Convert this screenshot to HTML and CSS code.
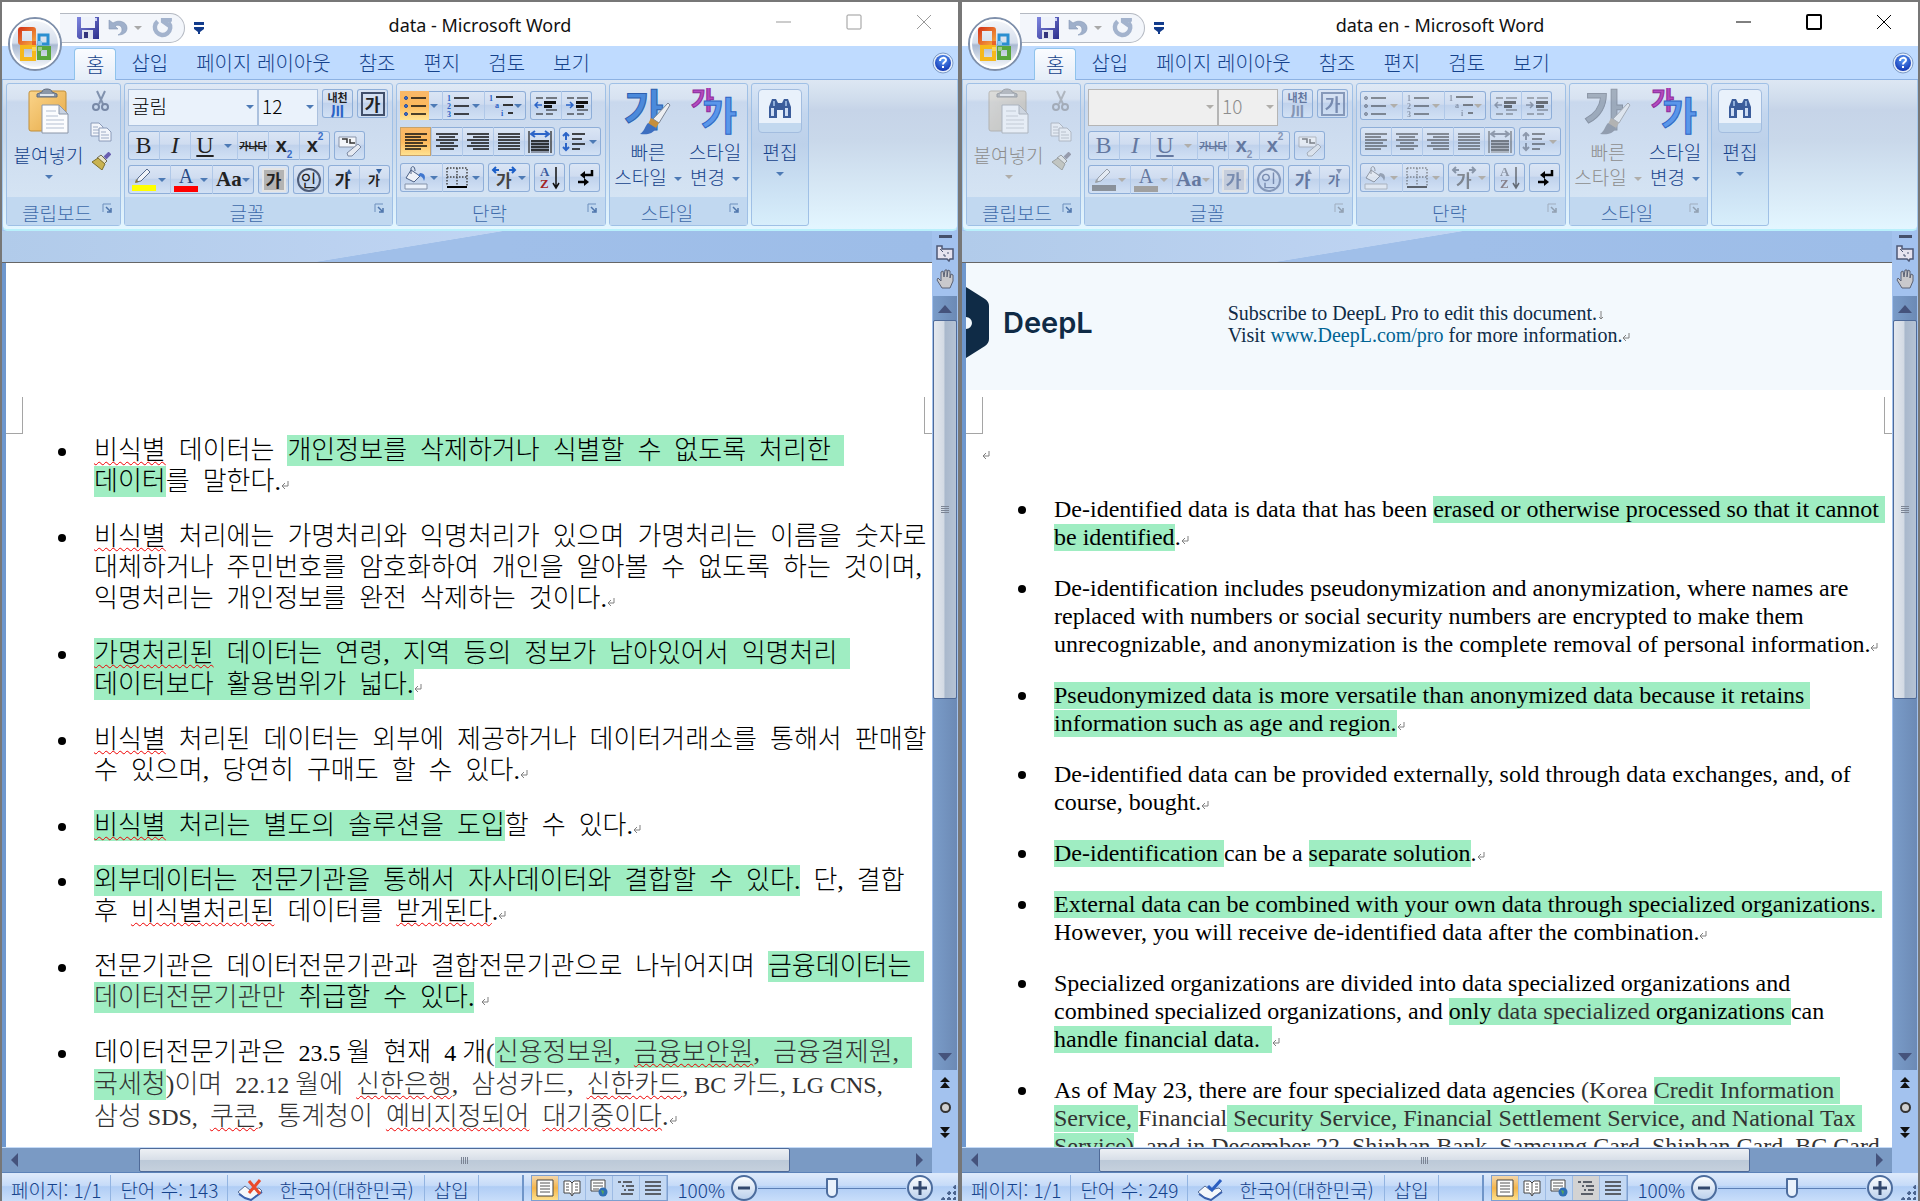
FILE: index.html
```html
<!DOCTYPE html>
<html lang="ko">
<head>
<meta charset="UTF-8">
<meta name="viewport" content="width=device-width, initial-scale=1">
<title>Microsoft Word</title>
<link rel="stylesheet" href="styles.css">
</head>
<body>

<!-- Icons shared by both windows -->
<svg class="sprite" aria-hidden="true">
  <defs>
    <linearGradient id="gOrb" x1="0" y1="0" x2="0" y2="1">
      <stop offset="0" stop-color="#f7f9fc"/><stop offset=".48" stop-color="#d5deec"/>
      <stop offset=".52" stop-color="#a9b9d2"/><stop offset="1" stop-color="#ffffff"/>
    </linearGradient>
    <linearGradient id="gDisk" x1="0" y1="0" x2="1" y2="1">
      <stop offset="0" stop-color="#7f86e0"/><stop offset="1" stop-color="#2c2f8c"/>
    </linearGradient>
    <linearGradient id="gRed" x1="0" y1="0" x2="1" y2="1">
      <stop offset="0" stop-color="#d63c1c"/><stop offset="1" stop-color="#f7a13c"/>
    </linearGradient>
    <linearGradient id="gBoard" x1="0" y1="0" x2="1" y2="1">
      <stop offset="0" stop-color="#fbd48a"/><stop offset="1" stop-color="#e5a945"/>
    </linearGradient>
    <radialGradient id="gHelp" cx=".5" cy=".3" r=".7">
      <stop offset="0" stop-color="#5b9bf5"/><stop offset="1" stop-color="#1236b4"/>
    </radialGradient>
    <linearGradient id="gZoom" x1="0" y1="0" x2="0" y2="1">
      <stop offset="0" stop-color="#ffffff"/><stop offset="1" stop-color="#b9cfec"/>
    </linearGradient>
  </defs>
  <symbol id="orb" viewBox="0 0 56 56">
    <circle cx="28" cy="28" r="26" fill="url(#gOrb)" stroke="#7f90ab" stroke-width="2"/>
    <circle cx="28" cy="28" r="24" fill="none" stroke="#fff" stroke-width="2"/>
    <rect x="13" y="13" width="14" height="14" rx="1" fill="none" stroke="url(#gRed)" stroke-width="4"/>
    <rect x="32" y="19" width="9" height="9" fill="none" stroke="#2b8fd0" stroke-width="3"/>
    <rect x="15" y="31" width="12" height="12" fill="none" stroke="#f5b81c" stroke-width="4"/>
    <rect x="32" y="32" width="10" height="10" fill="none" stroke="#58a63c" stroke-width="4"/>
    <path d="M25 25h4v4h-4z" fill="#e8632a"/><path d="M31 25h4v4h-4z" fill="#8ec9ee"/>
    <path d="M25 31h4v4h-4z" fill="#fbd655"/><path d="M31 31h4v4h-4z" fill="#9ccb86"/>
  </symbol>
  <symbol id="save" viewBox="0 0 22 22">
    <path d="M0 0h22v22H2L0 20z" fill="url(#gDisk)"/>
    <path d="M4 0h14v11H4z" fill="#eef2fb"/><path d="M18 1h2v3h-2z" fill="#cfd4f5"/>
    <path d="M5 13h11v9H5z" fill="#dfe4f0"/><path d="M7 15h4v6H7z" fill="#33347c"/>
  </symbol>
  <symbol id="undo" viewBox="0 0 20 20">
    <path d="M1 2v9h9l-3-3c4-2 7 0 7 4 0 2-2 4-4 5 6 0 9-3 9-7 0-6-8-9-14-5z" fill="#9fb0cb" stroke="#8798b6" stroke-width=".6"/>
  </symbol>
  <symbol id="redo" viewBox="0 0 20 20">
    <path d="M6 4a7 7 0 1 0 10 1" fill="none" stroke="#a3b3cd" stroke-width="4"/>
    <path d="M9 1h10v3l-3 1v5l-7-5z" fill="#a3b3cd"/>
  </symbol>
  <symbol id="customize" viewBox="0 0 10 12">
    <path d="M0 0h10v3H0zM0 5h10v2L6 10v2H4v-2L0 7z" fill="#123b8c"/>
  </symbol>
  <symbol id="help" viewBox="0 0 22 22">
    <circle cx="11" cy="11" r="10" fill="#e6effb" stroke="#7d9bc6"/>
    <circle cx="11" cy="11" r="8" fill="url(#gHelp)"/>
    <path d="M8 9c0-4 6-4 6-1 0 2-3 2-3 4.500" fill="none" stroke="#fff" stroke-width="2"/><path d="M10 14h2v2h-2z" fill="#fff"/>
  </symbol>
  <symbol id="paste" viewBox="0 0 42 46">
    <rect x="1" y="3" width="37" height="40" rx="2" fill="url(#gBoard)" stroke="#c18f3a"/>
    <path d="M9 9V6l5-2c0-4 10-4 10 0l5 2v3z" fill="#8b97a8" stroke="#5f6b7d"/><path d="M12 6h14v2H12z" fill="#dfe5ec"/>
    <path d="M14 17h17l9 9v19H14z" fill="#fbfcfe" stroke="#8b96a8"/><path d="M31 17v9h9z" fill="#c9d3e2" stroke="#8b96a8"/>
    <path d="M18 23h10M18 28h12M18 32h18M18 36h18M18 40h18" stroke="#b4bfd1"/>
  </symbol>
  <symbol id="cut" viewBox="0 0 20 22">
    <path d="M6 1l6 13M14 1L8 14" stroke="#8192ae" stroke-width="2"/>
    <circle cx="5" cy="17" r="3" fill="none" stroke="#7788a6" stroke-width="2"/><circle cx="14" cy="17" r="3" fill="none" stroke="#7788a6" stroke-width="2"/>
  </symbol>
  <symbol id="copy" viewBox="0 0 22 20">
    <path d="M1 1h8l4 4v9H1z" fill="#f3f6fb" stroke="#8a9ab8"/><path d="M3 5h5M3 8h8M3 11h8" stroke="#9dabc4"/>
    <path d="M9 6h8l4 4v9H9z" fill="#f3f6fb" stroke="#8a9ab8"/><path d="M11 10h5M11 13h8M11 16h8" stroke="#9dabc4"/>
  </symbol>
  <symbol id="brush" viewBox="0 0 20 18">
    <path d="M19 1l-5 5" stroke="#6a5fb0" stroke-width="4"/>
    <path d="M10 3l6 6-3 3-7-6z" fill="#e8e4c8" stroke="#6d6a55"/><path d="M7 6l7 6-3 6L1 10z" fill="#c9b350" stroke="#7d6e2c"/>
  </symbol>
  <symbol id="launch" viewBox="0 0 11 11">
    <path d="M1 9V1h8" fill="none" stroke="#6c8fbd"/><path d="M4 4l4 4M9 5v4H5" fill="none" stroke="#4d74ab" stroke-width="1.500"/>
  </symbol>
  <symbol id="eraser" viewBox="0 0 24 24">
    <path d="M1 3h17v10H1z" fill="#f4f6fa" stroke="#8893a8"/><path d="M4 5h5v4M12 5v4h5" fill="none" stroke="#333" stroke-width="1.500"/>
    <path d="M20 10l3 3-9 9h-4l-1-3z" fill="#e6eaf2" stroke="#7e8aa3"/>
  </symbol>
  <symbol id="bullets" viewBox="0 0 24 22">
    <path d="M8 3h15M8 11h15M8 19h15" stroke="#111" stroke-width="1.500"/>
    <g fill="#4676d2" stroke="#234a9c"><circle cx="3" cy="3" r="1.500"/><circle cx="3" cy="11" r="1.500"/><circle cx="3" cy="19" r="1.500"/></g>
  </symbol>
  <symbol id="outdent" viewBox="0 0 24 20">
    <path d="M2 2h7M12 2h11M12 14h11M2 18h7M12 18h7" stroke="#111" stroke-width="1.200"/><path d="M10 5h12v3H10zM10 9h8v3h-8z" fill="#111"/>
    <path d="M1 9h7M4 6L1 9l3 3" fill="none" stroke="#2b64c8" stroke-width="1.500"/>
  </symbol>
  <symbol id="indent" viewBox="0 0 24 20">
    <path d="M2 2h7M12 2h11M12 14h11M2 18h7M12 18h7" stroke="#111" stroke-width="1.200"/><path d="M11 5h12v3H11zM11 9h8v3h-8z" fill="#111"/>
    <path d="M1 9h7M5 6l3 3-3 3" fill="none" stroke="#2b64c8" stroke-width="1.500"/>
  </symbol>
  <symbol id="left" viewBox="0 0 22 18"><path d="M0 1h22M0 4h16M0 7h22M0 10h18M0 13h22M0 16h16" stroke="#111" stroke-width="1.300"/></symbol>
  <symbol id="center" viewBox="0 0 22 18"><path d="M0 1h22M3 4h16M0 7h22M4 10h14M0 13h22M4 16h14" stroke="#111" stroke-width="1.300"/></symbol>
  <symbol id="right" viewBox="0 0 22 18"><path d="M0 1h22M6 4h16M0 7h22M4 10h18M0 13h22M6 16h16" stroke="#111" stroke-width="1.300"/></symbol>
  <symbol id="justify" viewBox="0 0 22 18"><path d="M0 1h22M0 4h22M0 7h22M0 10h22M0 13h22M0 16h22" stroke="#111" stroke-width="1.300"/></symbol>
  <symbol id="spread" viewBox="0 0 24 24">
    <path d="M1 1v22M23 1v22" stroke="#444" stroke-width="1.500"/><path d="M3 10h18v13H3z" fill="#8b95a6"/><path d="M3 11h18M3 14h18M3 17h18M3 20h18" stroke="#111" stroke-width="1.300"/>
    <path d="M3 4h18M7 1L3 4l4 3M17 1l4 3-4 3" fill="none" stroke="#2b64c8" stroke-width="2"/>
  </symbol>
  <symbol id="spacing" viewBox="0 0 24 20">
    <path d="M10 2h13M10 7h10M10 12h13M10 17h8" stroke="#111" stroke-width="1.300"/>
    <path d="M4 1v7M1 4l3-3 3 3M4 11v7M1 15l3 3 3-3" fill="none" stroke="#2b64c8" stroke-width="2"/>
  </symbol>
  <symbol id="bucket" viewBox="0 0 26 24">
    <path d="M8 4l9 6-6 6-8-4z" fill="#eef2f8" stroke="#4c6084"/><path d="M8 8V2c2-3 4-1 4 3" fill="none" stroke="#4c6084"/><path d="M17 7c5 0 6 4 4 8-1-4-3-5-6-5z" fill="#3f76cf"/>
    <path d="M2 18h22v5H2z" fill="#e9f1fb" stroke="#8593aa"/>
  </symbol>
  <symbol id="borders" viewBox="0 0 22 22">
    <path d="M1 1h20v18M1 1v18M11 1v18M1 10h20" fill="none" stroke="#444" stroke-width="1.500" stroke-dasharray="1.500 1.500"/><path d="M1 20h20" stroke="#000" stroke-width="2"/>
  </symbol>
  <symbol id="marks" viewBox="0 0 20 22">
    <path d="M17 3v5H9M3 15h7" fill="none" stroke="#000" stroke-width="2.500"/><path d="M10 4v8L5 8zM9 11v8l5-4z"/>
  </symbol>
  <symbol id="find" viewBox="0 0 24 20">
    <path d="M4 1h4l2 4h4l2-4h4l3 8v11h-8v-8h-6v8H1V9z" fill="#3b5c9b"/>
    <path d="M3 10h3v8H3zM17 10h3v8h-3z" fill="#cddcf3"/><path d="M5 3h2v5H5zM17 3h2v5h-2z" fill="#8fadd9"/>
  </symbol>
  <symbol id="ruler" viewBox="0 0 18 18">
    <path d="M1 2h5v3h11v10h-3l-1 2-2-2H1z" fill="#e6e3ef" stroke="#4d5875" stroke-width="1.500"/><path d="M4 5l3 3M7 11h2v2M12 8v2" stroke="#4d5875" fill="none"/>
  </symbol>
  <symbol id="hand" viewBox="0 0 18 20">
    <path d="M5 12L2 9 1 11l5 8h8l3-7V6l-2-1-1 4V2l-2-1-1 7V1H9L8 8 7 2 5 3z" fill="#c9c9cc" stroke="#5b6172"/>
  </symbol>
  <symbol id="dblUp" viewBox="0 0 10 12"><path d="M5 0l5 5H0zM5 5l5 6H0z" fill="#111"/></symbol>
  <symbol id="dblDown" viewBox="0 0 10 12"><path d="M0 1h10L5 7zM0 7h10l-5 5z" fill="#111"/></symbol>
  <symbol id="vPrint" viewBox="0 0 18 18"><path d="M1 1h16v16H1z" fill="#fff" stroke="#444"/><path d="M4 4h10M4 7h10M4 10h10M4 13h10" stroke="#555"/></symbol>
  <symbol id="vRead" viewBox="0 0 18 18"><path d="M1 2h6l2 2 2-2h6v12h-6l-2 3-2-3H1z" fill="#fff" stroke="#444"/><path d="M9 4v12M3 5h3M3 8h3M3 11h3M12 5h3M12 8h3M12 11h3" stroke="#555"/></symbol>
  <symbol id="vWeb" viewBox="0 0 18 18"><path d="M1 1h14v11H1z" fill="#fff" stroke="#444"/><path d="M3 4h10M3 7h10M3 10h6" stroke="#555"/><circle cx="13" cy="13" r="4.500" fill="#2f6fb5"/><path d="M11 11l3 1-1 4z" fill="#59a85a"/></symbol>
  <symbol id="vOutline" viewBox="0 0 18 18"><path d="M1 3h3M6 3h9M5 7h2M9 7h8M7 11h2M11 11h6M4 15h12" stroke="#5a5f68" stroke-width="2"/></symbol>
  <symbol id="vDraft" viewBox="0 0 18 18"><path d="M1 3h16M1 7h16M1 11h16M1 15h16" stroke="#5a5f68" stroke-width="2"/></symbol>
  <symbol id="minus" viewBox="0 0 26 26"><circle cx="13" cy="13" r="12" fill="url(#gZoom)" stroke="#4c6c9d" stroke-width="2"/><path d="M7 13h12" stroke="#33486d" stroke-width="3"/></symbol>
  <symbol id="plus" viewBox="0 0 26 26"><circle cx="13" cy="13" r="12" fill="url(#gZoom)" stroke="#4c6c9d" stroke-width="2"/><path d="M6 13h14M13 6v14" stroke="#33486d" stroke-width="3"/></symbol>
  <symbol id="ret" viewBox="0 0 8 9"><path d="M7 0v5H1M4 2L1 5l3 3" fill="none" stroke="#808080"/></symbol>
  <symbol id="brk" viewBox="0 0 8 9"><path d="M4 0v8M2 6l2 2 2-2" fill="none" stroke="#808080"/></symbol>
</svg>

<!-- Title bar, tabs and ribbon -->
<template id="topTemplate">
  <header class="titlebar">
    <div class="quick-access">
      <div class="qa-box">
        <button aria-label="저장"><svg width="22" height="22"><use href="#save"/></svg></button>
        <button aria-label="실행 취소"><svg width="20" height="20"><use href="#undo"/></svg><i class="arrow dim"></i></button>
        <button aria-label="다시 실행"><svg width="22" height="22"><use href="#redo"/></svg></button>
      </div>
      <button aria-label="빠른 실행 도구 모음 사용자 지정"><svg width="10" height="12"><use href="#customize"/></svg></button>
    </div>
    <h1 class="title"></h1>
    <div class="win-buttons">
      <button aria-label="최소화"><svg width="16" height="16"><path d="M0 8h15"/></svg></button>
      <button aria-label="최대화"><svg width="16" height="16"><rect x="1" y="1" width="14" height="14" rx="1"/></svg></button>
      <button aria-label="닫기"><svg width="16" height="16"><path d="M1 1l14 14M15 1L1 15"/></svg></button>
    </div>
    <button class="orb" aria-label="Office 단추"><svg width="56" height="56"><use href="#orb"/></svg></button>
  </header>
  <nav class="tabs">
    <button class="active">홈</button><button>삽입</button><button>페이지 레이아웃</button><button>참조</button><button>편지</button><button>검토</button><button>보기</button>
    <button class="help" aria-label="도움말"><svg width="22" height="22"><use href="#help"/></svg></button>
  </nav>
  <div class="ribbon">
    <section class="group clipboard">
      <div class="group-body">
        <button class="big edit"><svg width="42" height="46"><use href="#paste"/></svg><span>붙여넣기</span><i class="arrow"></i></button>
        <div class="small-icons">
          <button class="edit" aria-label="잘라내기"><svg width="20" height="22"><use href="#cut"/></svg></button>
          <button class="edit" aria-label="복사"><svg width="22" height="20"><use href="#copy"/></svg></button>
          <button class="edit" aria-label="서식 복사"><svg width="20" height="18"><use href="#brush"/></svg></button>
        </div>
      </div>
      <h2>클립보드<button class="launcher" aria-label="클립보드 열기"><svg width="11" height="11"><use href="#launch"/></svg></button></h2>
    </section>
    <section class="group font">
      <div class="group-body">
        <div class="row">
          <div class="combos">
            <label class="combo name"><select class="edit" aria-label="글꼴"><option>굴림</option></select><i class="arrow"></i></label>
            <label class="combo size"><select class="edit" aria-label="글꼴 크기"><option>12</option></select><i class="arrow"></i></label>
          </div>
          <div class="seg"><button class="edit ruby" aria-label="윗주 달기">내천<b>川</b></button></div>
          <div class="seg"><button class="edit" aria-label="문자 테두리"><span class="boxed">가</span></button></div>
        </div>
        <div class="row">
          <div class="seg">
            <button class="edit serif"><b>B</b></button><button class="edit serif"><em>I</em></button>
            <button class="edit serif wide"><u>U</u><i class="arrow"></i></button>
            <button class="edit strike"><s>가나다</s></button>
            <button class="edit script">x<sub>2</sub></button><button class="edit script">x<sup>2</sup></button>
          </div>
          <div class="seg"><button class="edit" aria-label="서식 지우기"><svg width="24" height="24"><use href="#eraser"/></svg></button></div>
        </div>
        <div class="row">
          <div class="seg">
            <button class="edit drop" aria-label="강조 색">
              <svg width="26" height="24">
                <path d="M16 1l3 3-9 9-5 1 2-4z" fill="#f1f4f9" stroke="#56698c"/><path d="M5 11l-1 4 4-1z" fill="#8b7a3a"/>
                <path class="ink" d="M1 17h24v6H1z"/>
              </svg><i class="arrow"></i>
            </button>
            <button class="edit drop"><span class="color-a">A</span><i class="arrow"></i></button>
            <button class="edit drop"><span class="case">Aa</span><i class="arrow"></i></button>
          </div>
          <div class="seg"><button class="edit"><span class="shaded">가</span></button></div>
          <div class="seg"><button class="edit"><span class="circled">인</span></button></div>
          <div class="seg"><button class="edit grow">가</button><button class="edit shrink">가</button></div>
        </div>
      </div>
      <h2>글꼴<button class="launcher edit" aria-label="글꼴 열기"><svg width="11" height="11"><use href="#launch"/></svg></button></h2>
    </section>
    <section class="group paragraph">
      <div class="group-body">
        <div class="row">
          <div class="seg">
            <button class="edit drop on" aria-label="글머리 기호"><svg width="24" height="22"><use href="#bullets"/></svg><i class="arrow"></i></button>
            <button class="edit drop" aria-label="번호 매기기">
              <svg class="num-icon" width="24" height="22">
                <path d="M8 3h15M8 11h15M8 19h15" stroke="#111" stroke-width="1.500"/>
                <text x="1" y="6">1</text><text x="1" y="14">2</text><text x="1" y="22">3</text>
              </svg><i class="arrow"></i>
            </button>
            <button class="edit drop" aria-label="다단계 목록">
              <svg class="num-icon" width="26" height="24">
                <path d="M8 3h17M15 11h10M20 19h5" stroke="#333" stroke-width="2"/>
                <text x="1" y="7">1</text><text x="7" y="14">a</text><text x="13" y="22">i</text>
              </svg><i class="arrow"></i>
            </button>
          </div>
          <div class="seg">
            <button class="edit" aria-label="내어쓰기"><svg width="24" height="20"><use href="#outdent"/></svg></button>
            <button class="edit" aria-label="들여쓰기"><svg width="24" height="20"><use href="#indent"/></svg></button>
          </div>
        </div>
        <div class="row">
          <div class="seg">
            <button class="edit on" aria-label="왼쪽 맞춤"><svg width="22" height="18"><use href="#left"/></svg></button>
            <button class="edit" aria-label="가운데 맞춤"><svg width="22" height="18"><use href="#center"/></svg></button>
            <button class="edit" aria-label="오른쪽 맞춤"><svg width="22" height="18"><use href="#right"/></svg></button>
            <button class="edit" aria-label="양쪽 맞춤"><svg width="22" height="18"><use href="#justify"/></svg></button>
            <button class="edit" aria-label="균등 분할"><svg width="24" height="24"><use href="#spread"/></svg></button>
          </div>
          <div class="seg"><button class="edit drop" aria-label="줄 간격"><svg width="24" height="20"><use href="#spacing"/></svg><i class="arrow"></i></button></div>
        </div>
        <div class="row">
          <div class="seg">
            <button class="edit drop" aria-label="음영"><svg width="26" height="24"><use href="#bucket"/></svg><i class="arrow"></i></button>
            <button class="edit drop" aria-label="테두리"><svg width="22" height="22"><use href="#borders"/></svg><i class="arrow"></i></button>
          </div>
          <div class="seg">
            <button class="edit drop" aria-label="한글 레이아웃">
              <svg class="hangul-icon" width="26" height="24">
                <text x="5" y="21" font-size="17" fill="#444">가</text>
                <path d="M8 4H2M5 1L2 4l3 3M18 4h6M21 1l3 3-3 3" fill="none" stroke="#1c5fc8" stroke-width="2"/>
              </svg><i class="arrow"></i>
            </button>
          </div>
          <div class="seg">
            <button class="edit" aria-label="정렬">
              <svg class="sort-icon" width="22" height="26">
                <text x="1" y="11" fill="#3a5b9e">A</text><text x="1" y="23" fill="#a32525">Z</text>
                <path d="M17 2v20M14 18l3 5 3-5" fill="none" stroke="#111" stroke-width="1.500"/>
              </svg>
            </button>
          </div>
          <div class="seg"><button aria-label="편집 기호"><svg width="20" height="22"><use href="#marks"/></svg></button></div>
        </div>
      </div>
      <h2>단락<button class="launcher edit" aria-label="단락 열기"><svg width="11" height="11"><use href="#launch"/></svg></button></h2>
    </section>
    <section class="group styles">
      <div class="group-body">
        <button class="big edit">
          <svg class="hangul-icon" width="48" height="48">
            <text x="0" y="38" font-size="43" fill="#4b8adb" stroke="#2d5fae">가</text>
            <path d="M44 15l2 2-11 18-6-4z" fill="#eceef2" stroke="#7b8493"/><path d="M27 30l8 5-3 5-8-4z" fill="#c68f3c"/><path d="M24 35l8 5c-3 6-9 7-16 6 4-2 5-8 8-11z" fill="#3d6fc0"/>
          </svg>
          <span>빠른<br>스타일<i class="arrow"></i></span>
        </button>
        <button class="big">
          <svg class="hangul-icon" width="48" height="48">
            <text x="0" y="21" font-size="25" fill="#b44abf" stroke="#8d2c9c">가</text>
            <text x="10" y="42" font-size="39" fill="#5a96ea" stroke="#2d65c4">가</text>
          </svg>
          <span>스타일<br>변경<i class="arrow"></i></span>
        </button>
      </div>
      <h2>스타일<button class="launcher edit" aria-label="스타일 열기"><svg width="11" height="11"><use href="#launch"/></svg></button></h2>
    </section>
    <section class="group editing">
      <button class="big"><span class="find-frame"><svg width="24" height="20"><use href="#find"/></svg></span><span>편집</span><i class="arrow"></i></button>
    </section>
  </div>
  <div class="strip"></div>
</template>

<!-- Scroll bars and status bar -->
<template id="bottomTemplate">
  <aside class="side">
    <i class="split"></i>
    <button aria-label="눈금자"><svg width="18" height="18"><use href="#ruler"/></svg></button>
    <button aria-label="이동"><svg width="18" height="20"><use href="#hand"/></svg></button>
    <div class="vscroll">
      <i class="tri up"></i>
      <div class="vthumb"><i class="grip"></i></div>
      <i class="tri down"></i>
    </div>
    <div class="browse">
      <button aria-label="이전 페이지"><svg width="10" height="12"><use href="#dblUp"/></svg></button>
      <button aria-label="찾아보기 개체 선택"><i class="ball"></i></button>
      <button aria-label="다음 페이지"><svg width="10" height="12"><use href="#dblDown"/></svg></button>
    </div>
  </aside>
  <div class="hscroll">
    <i class="tri prev"></i>
    <div class="hthumb"><i class="grip"></i></div>
    <i class="tri next"></i>
  </div>
  <footer class="status">
    <span>페이지: 1/1</span>
    <span>단어 수: <b class="words"></b></span>
    <span class="lang">
      <svg width="26" height="22">
        <path d="M1 13l7-6 5 4 9-2 3 3-11 9-6-2z" fill="#f4f7fb" stroke="#5a6f97"/><path d="M2 15l6 4 6 2 11-8" fill="none" stroke="#3c61ad" stroke-width="2"/>
        <path class="proof-bad" d="M12 2l11 13M23 1L12 14" stroke="#ea4a2c" stroke-width="3"/>
        <path class="proof-ok" d="M11 7l4 4 9-10" fill="none" stroke="#2c5fc0" stroke-width="3"/>
      </svg>한국어(대한민국)
    </span>
    <span>삽입</span>
    <span class="fill"></span>
    <div class="views">
      <button class="on" aria-label="인쇄 모양"><svg width="18" height="18"><use href="#vPrint"/></svg></button>
      <button aria-label="전체 화면 읽기"><svg width="18" height="18"><use href="#vRead"/></svg></button>
      <button aria-label="웹 모양"><svg width="18" height="18"><use href="#vWeb"/></svg></button>
      <button class="outline" aria-label="개요"><svg width="18" height="18"><use href="#vOutline"/></svg></button>
      <button aria-label="초안"><svg width="18" height="18"><use href="#vDraft"/></svg></button>
    </div>
    <span class="percent">100%</span>
    <button aria-label="축소"><svg width="26" height="26"><use href="#minus"/></svg></button>
    <input type="range" min="0" max="200" value="100" aria-label="확대/축소">
    <button aria-label="확대"><svg width="26" height="26"><use href="#plus"/></svg></button>
    <i class="resize"></i>
  </footer>
</template>

<main class="desktop">
  <article class="window inactive" data-title="data - Microsoft Word" data-words="143">
    <div class="page korean">
      <div class="page-head"></div>
      <div class="crop"></div>
      <ul>
        <li><u>비식별</u>&ensp;데이터는&ensp;<mark>개인정보를&ensp;삭제하거나&ensp;식별할&ensp;수&ensp;없도록&ensp;처리한&ensp;</mark><br><mark>데이터</mark>를&ensp;말한다.<svg class="ret"><use href="#ret"/></svg></li>
        <li><u>비식별</u>&ensp;처리에는&ensp;가명처리와&ensp;익명처리가&ensp;있으며&ensp;가명처리는&ensp;이름을&ensp;숫자로<br>대체하거나&ensp;주민번호를&ensp;암호화하여&ensp;개인을&ensp;알아볼&ensp;수&ensp;없도록&ensp;하는&ensp;것이며,<br>익명처리는&ensp;개인정보를&ensp;완전&ensp;삭제하는&ensp;것이다.<svg class="ret"><use href="#ret"/></svg></li>
        <li><mark><u>가명처리된</u>&ensp;데이터는&ensp;연령,&ensp;지역&ensp;등의&ensp;정보가&ensp;남아있어서&ensp;익명처리&ensp;</mark><br><mark>데이터보다&ensp;활용범위가&ensp;넓다.</mark><svg class="ret"><use href="#ret"/></svg></li>
        <li><u>비식별</u>&ensp;처리된&ensp;데이터는&ensp;외부에&ensp;제공하거나&ensp;데이터거래소를&ensp;통해서&ensp;판매할<br>수&ensp;있으며,&ensp;당연히&ensp;구매도&ensp;할&ensp;수&ensp;있다.<svg class="ret"><use href="#ret"/></svg></li>
        <li><mark><u>비식별</u>&ensp;처리는&ensp;별도의&ensp;솔루션을&ensp;도입</mark>할&ensp;수&ensp;있다.<svg class="ret"><use href="#ret"/></svg></li>
        <li><mark>외부데이터는&ensp;전문기관을&ensp;통해서&ensp;자사데이터와&ensp;결합할&ensp;수&ensp;있다.</mark>&ensp;단,&ensp;결합<br>후&ensp;<u>비식별처리된</u>&ensp;데이터를&ensp;<u>받게된다</u>.<svg class="ret"><use href="#ret"/></svg></li>
        <li>전문기관은&ensp;데이터전문기관과&ensp;결합전문기관으로&ensp;나뉘어지며&ensp;<mark>금융데이터는&ensp;</mark><br><mark><span class="soft">데이터전문기관만</span>&ensp;취급할&ensp;수&ensp;있다.</mark>&nbsp;<svg class="ret"><use href="#ret"/></svg></li>
        <li>데이터전문기관은&ensp;<span class="latin">23.5 </span>월&ensp;현재&ensp;<span class="latin">4 </span>개<span class="soft">(<mark>신용정보원,&ensp;<u>금융보안원</u>,&ensp;금융결제원,&ensp;</mark><br><mark>국세청</mark>)이며&ensp;<span class="latin">22.12 </span>월에&ensp;<u>신한은행</u>,&ensp;삼성카드,&ensp;<u>신한카드</u><span class="latin">, BC </span>카드<span class="latin">, LG CNS,</span><br>삼성<span class="latin"> SDS,&ensp;</span><u>쿠콘</u>,&ensp;통계청이&ensp;<u>예비지정되어</u>&ensp;<u>대기중이다</u>.</span><svg class="ret"><use href="#ret"/></svg></li>
      </ul>
    </div>
  </article>

  <article class="window locked" data-title="data en - Microsoft Word" data-words="249">
    <div class="page english" lang="en">
      <div class="page-head deepl">
        <svg class="deepl-logo" width="23" height="72"><path d="M0 0l19 12q4 3 4 7v33q0 4-4 7L0 71V42a6 6 0 0 0 0-12z" fill="#0f2b46"/></svg>
        <strong>DeepL</strong>
        <p>Subscribe to DeepL Pro to edit this document.<svg class="ret"><use href="#brk"/></svg><br>Visit <a href="https://www.DeepL.com/pro">www.DeepL.com/pro</a> for more information.<svg class="ret"><use href="#ret"/></svg></p>
      </div>
      <div class="crop"></div>
      <p class="blank"><svg class="ret"><use href="#ret"/></svg></p>
      <ul>
        <li>De-identified data is data that has been <mark>erased or otherwise processed so that it cannot </mark><br><mark>be identified</mark>.<svg class="ret"><use href="#ret"/></svg></li>
        <li>De-identification includes pseudonymization and anonymization, where names are<br>replaced with numbers or social security numbers are encrypted to make them<br>unrecognizable, and anonymization is the complete removal of personal information.<svg class="ret"><use href="#ret"/></svg></li>
        <li><mark>Pseudonymized data is more versatile than anonymized data because it retains </mark><br><mark>information such as age and region.</mark><svg class="ret"><use href="#ret"/></svg></li>
        <li>De-identified data can be provided externally, sold through data exchanges, and, of<br>course, bought.<svg class="ret"><use href="#ret"/></svg></li>
        <li><mark>De-identification </mark>can be a <mark>separate solution</mark>.<svg class="ret"><use href="#ret"/></svg></li>
        <li><mark>External data can be combined with your own data through specialized organizations. </mark><br>However, you will receive de-identified data after the combination.<svg class="ret"><use href="#ret"/></svg></li>
        <li>Specialized organizations are divided into data specialized organizations and<br>combined specialized organizations, and <mark>only <span class="soft">data specialized</span> organizations </mark>can<br><mark>handle financial data.&nbsp; </mark><svg class="ret"><use href="#ret"/></svg></li>
        <li>As of May 23, there are four specialized data agencies <span class="soft">(Korea <mark>Credit Information </mark><br><mark>Service, </mark>Financial<mark> Security Service, Financial Settlement Service, and National Tax </mark><br><mark>Service)</mark>, and in December 22, Shinhan Bank, Samsung Card, Shinhan Card, BC Card</span></li>
      </ul>
    </div>
  </article>
</main>

<script src="script.js"></script>
</body>
</html>
```
FILE: styles.css
```css
* {
  box-sizing: border-box;
}
body {
  margin: 0;
  font-family: "Noto Sans CJK KR", sans-serif;
  font-weight: 300;
  background: #777;
}
h1, h2, p, ul {
  margin: 0;
  padding: 0;
  font-weight: inherit;
}
button {
  display: inline-flex;
  align-items: center;
  justify-content: center;
  padding: 0;
  border: 0;
  background: none;
  font: inherit;
  color: inherit;
}
.sprite {
  position: absolute;
  width: 0;
  height: 0;
}
svg {
  flex: none;
}
.desktop {
  display: flex;
  height: 100vh;
}
.window {
  flex: 1;
  min-width: 0;
  display: grid;
  grid-template-columns: minmax(0, 1fr) 26px;
  grid-template-rows: 44px 34px 151px 32px minmax(0, 1fr) 26px 28px;
  border: 2px solid #777;
  border-bottom: 0;
  background: #a3c2ee;
}
.titlebar, .tabs, .ribbon, .status {
  grid-column: 1 / 3;
}
.arrow {
  flex: none;
  display: inline-block;
  border: 4px solid transparent;
  border-top-color: #4d7ab5;
  border-bottom: 0;
}
.arrow.dim {
  border-top-color: #a9a9a9;
}

/* Title bar */
.titlebar {
  position: relative;
  display: grid;
  grid-template-columns: 1fr auto 1fr;
  background: #fff;
}
.title {
  align-self: center;
  padding-top: 2px;
  font-size: 18px;
  font-family: "Noto Sans", sans-serif;
  font-weight: 400;
  color: #111;
}
.quick-access {
  display: flex;
  align-items: center;
  gap: 9px;
  padding: 8px 0 0 58px;
}
.qa-box {
  display: flex;
  align-items: center;
  gap: 9px;
  height: 30px;
  padding: 0 11px 0 17px;
  background: #f3f6fb;
  border: 1px solid #b4b9c2;
  border-left: 0;
  border-radius: 0 15px 15px 0;
}
.qa-box .arrow {
  margin-left: 6px;
}
.orb {
  position: absolute;
  left: 5px;
  top: 14px;
  z-index: 2;
}
.win-buttons {
  display: flex;
  justify-content: flex-end;
  align-items: center;
  gap: 54px;
  padding: 0 26px 4px 0;
}
.win-buttons svg {
  fill: none;
  stroke: #000;
  stroke-width: 1;
}
.inactive .win-buttons svg {
  stroke: #999;
}
.win-buttons button:nth-child(2) svg {
  stroke-width: 2;
}
.inactive .win-buttons button:nth-child(2) svg {
  stroke-width: 1;
}

/* Tabs */
.tabs {
  display: flex;
  padding-left: 72px;
  background: #bfdbff;
  border-bottom: 1px solid #8db2e3;
  font-size: 20px;
  line-height: 34px;
  color: #15428b;
}
.tabs button {
  padding: 0 14px;
}
.tabs .active {
  margin: 2px 1px -1px 0;
  padding: 0 11px;
  line-height: 30px;
  background: linear-gradient(#fafcff, #e4edf8);
  border: 1px solid #8fc3ec;
  border-bottom: 0;
  border-radius: 4px 4px 0 0;
}
.tabs .help {
  margin-left: auto;
  padding: 0 4px;
}

/* Ribbon */
.ribbon {
  display: flex;
  gap: 3px;
  padding: 3px;
  border: 1px solid #a5c8ec;
  border-top: 0;
  border-bottom: 2px solid #b9f0fb;
  border-radius: 0 0 5px 5px;
  background: linear-gradient(#dde7f3, #cfdcec 20px, #c6d4e8 30px, #c9d8ea 60px, #e3f6ff);
  color: #15428b;
  font-size: 19px;
}
.group {
  display: flex;
  flex-direction: column;
  border: 1px solid #9fc0e6;
  border-radius: 3px;
  background: linear-gradient(#dfe9f5, #d7e2f1 15px, #c9d8ed 18px, #d8e7f5);
}
.group-body {
  flex: 1;
  display: flex;
}
.group h2 {
  display: flex;
  height: 28px;
  padding-right: 7px;
  line-height: 31px;
  font-size: 19px;
  background: #c1d8f0;
  color: #3e6aaa;
}
.group h2::before {
  content: "";
  flex: 1;
}
.group h2 .launcher {
  flex: 1;
  align-self: flex-start;
  justify-content: flex-end;
  margin: 6px 0 0 16px;
}
.clipboard h2 .launcher {
  margin-left: 6px;
}
.big {
  flex-direction: column;
  justify-content: flex-start;
  line-height: 25px;
  padding-top: 4px;
}
.big .arrow {
  margin-top: 8px;
}
.big span .arrow {
  margin: 0 0 4px 7px;
}
.clipboard {
  width: 115px;
}
.clipboard .big {
  width: 83px;
}
.clipboard .big span {
  margin-top: 8px;
}
.small-icons {
  display: flex;
  flex-direction: column;
  gap: 10px;
  padding-top: 6px;
}
.font {
  width: 269px;
}
.paragraph {
  width: 210px;
}
.font .group-body, .paragraph .group-body {
  flex-direction: column;
  gap: 5px;
  padding: 5px 3px 0;
}
.paragraph .group-body {
  gap: 7px;
  padding-top: 7px;
}
.row {
  display: flex;
  align-items: flex-start;
  gap: 4px;
}
.combos {
  display: flex;
}
.combo {
  position: relative;
}
.combo select {
  width: 100%;
  height: 37px;
  padding: 0 3px 4px;
  appearance: none;
  border: 1px solid #abc1de;
  border-radius: 0;
  background: #eaf2fb;
  font: inherit;
  font-size: 19px;
  color: #000;
  opacity: 1;
}
.combo.name {
  width: 130px;
}
.combo.size {
  width: 60px;
}
.combo .arrow {
  position: absolute;
  right: 4px;
  top: 16px;
}
.seg {
  display: flex;
  height: 29px;
  border-radius: 3px;
  background: linear-gradient(#dbe6f5, #cfdcf0 45%, #c0d2ec 50%, #d3e2f5);
  box-shadow: inset 0 0 0 1px #8eaed8;
}
.seg button {
  width: 31px;
  color: #222;
}
.seg button + button {
  border-left: 1px solid #b0c8e8;
}
.seg .drop {
  width: 42px;
  justify-content: space-between;
  padding: 0 4px 0 3px;
}
.seg .wide {
  width: 47px;
  gap: 10px;
}
.seg .on {
  background: linear-gradient(#f9b869, #fdb95c 50%, #ffe493);
  box-shadow: inset 0 0 0 1px #c7a26a;
}
.seg .drop.on {
  background: linear-gradient(#f9b869, #fdb95c 50%, #ffe493) no-repeat 0 0 / 29px 100%;
  box-shadow: none;
}
.serif {
  font-family: "Liberation Serif", serif;
  font-size: 24px;
}
.seg .ruby {
  flex-direction: column;
  font-size: 11px;
  font-weight: 700;
  line-height: 13px;
}
.ruby b {
  font-size: 14px;
  color: #2b62c6;
}
.boxed, .shaded, .circled {
  width: 24px;
  height: 24px;
  line-height: 20px;
  font-size: 17px;
  font-weight: 700;
  border: 2px solid #42506b;
}
.shaded {
  background: #b3b3b3;
  border-color: #e4e4e4;
}
.circled {
  font-weight: 400;
  border-radius: 50%;
  border-color: #4d5c78;
}
.strike {
  font-size: 10px;
  font-weight: 700;
  white-space: nowrap;
}
.script {
  font-family: "Liberation Sans", sans-serif;
  font-size: 20px;
  font-weight: 700;
}
.script sub, .script sup {
  font-size: 10px;
  color: #3a6cc6;
}
.script sub {
  align-self: flex-end;
}
.script sup {
  align-self: flex-start;
}
.color-a {
  width: 24px;
  font: 20px/19px "Liberation Serif", serif;
  color: #274a85;
  border-bottom: 6px solid #f00;
}
.ink {
  fill: #ff0;
}
.case {
  font: 700 21px "Liberation Serif", serif;
}
.num-icon text {
  font: 700 8px "Liberation Serif", serif;
  fill: #2b5fc4;
}
.hangul-icon text {
  font-family: "Noto Sans CJK KR", sans-serif;
  font-weight: 700;
}
.sort-icon text {
  font: 700 13px "Liberation Serif", serif;
}
.grow, .shrink {
  font-size: 17px;
  font-weight: 700;
}
.shrink {
  font-size: 13px;
}
.grow::after, .shrink::after {
  content: "";
  align-self: flex-start;
  margin: 4px 0 0 -4px;
  border: 3px solid transparent;
  border-top: 0;
  border-bottom: 5px solid #33609f;
}
.shrink::after {
  border-bottom: 0;
  border-top: 5px solid #33609f;
}
.styles {
  width: 139px;
}
.styles .big:first-child {
  width: 76px;
}
.styles .big:last-child {
  width: 58px;
}
.styles .big span {
  margin-top: 3px;
}
.editing {
  width: 58px;
  background: linear-gradient(#d9e6f6, #c3d6ee 30px, #bdd1ea 60px, #d7eefb);
}
.find-frame {
  display: flex;
  justify-content: center;
  width: 44px;
  height: 44px;
  margin: 1px 0 6px;
  padding-top: 8px;
  border: 1px solid #a3bddf;
  border-radius: 4px;
  background: linear-gradient(#e9f1fb 33px, #c2d8ef 33px);
}

/* Window with editing turned off */
.locked .edit:disabled {
  color: #8d8d8d;
}
.locked .seg .edit:disabled {
  color: #6478a0;
}
.locked .edit:disabled svg {
  filter: grayscale(.8);
  opacity: .55;
}
.locked .boxed, .locked .shaded, .locked .circled {
  opacity: .8;
}
.locked .boxed, .locked .circled {
  border-color: #7488ac;
}
.locked .shaded {
  background: #c3cad8;
}
.locked .edit:disabled .arrow, .locked .edit:disabled + .arrow {
  border-top-color: #b0aeaa;
}
.locked .color-a {
  color: #6478a0;
  border-color: #a0a0a0;
}
.locked .ink {
  fill: #555;
}
.locked .ruby b, .locked .script sub, .locked .script sup {
  color: #8595b5;
}
.locked .on.edit {
  background: none;
  box-shadow: none;
}
.locked .combo select {
  background: #efefef;
  border-color: #b5b5b5;
  color: #a5a19b;
}
.locked .grow::after {
  border-bottom-color: #8595b5;
}
.locked .shrink::after {
  border-top-color: #8595b5;
}

/* Strip above the page */
.strip {
  border-bottom: 1px solid #666;
  background:
    linear-gradient(to bottom right, transparent 50%, #a0bfe9 51%) no-repeat 312px 0 / 188px 100%,
    linear-gradient(90deg, #b1cbea, #c0d5f3 500px, #a0bfe9 500px, #9dbde8);
}
.side {
  grid-column: 2;
  grid-row: 4 / 7;
  display: flex;
  flex-direction: column;
  align-items: center;
  background: #a3c2ee;
}
.split {
  width: 13px;
  height: 3px;
  margin: 4px 0 6px;
  background: #45506b;
}
.side button {
  margin-bottom: 7px;
}
.side .browse button {
  margin-bottom: 6px;
}
.vscroll {
  align-self: stretch;
  flex: 1;
  display: flex;
  flex-direction: column;
  align-items: center;
  margin: 0 1px;
  background: linear-gradient(90deg, #7a9cc9, #6c8ab5);
}
.tri {
  border: 7px solid transparent;
}
.up {
  margin: 9px 0 7px;
  border-top: 0;
  border-bottom: 8px solid #45537c;
}
.down {
  margin: auto 0 9px;
  border-bottom: 0;
  border-top: 8px solid #45537c;
}
.vthumb {
  display: flex;
  flex-direction: column;
  align-items: center;
  justify-content: center;
  align-self: stretch;
  height: 49%;
  border: 1px solid #4f6a98;
  border-radius: 2px;
  background: linear-gradient(90deg, #e4e8ee, #d3dae4 45%, #a9b8cc 50%, #b5c2d4);
}
.grip {
  width: 8px;
  height: 7px;
  background: repeating-linear-gradient(#7b8494 0 1px, transparent 1px 2px);
}
.hthumb .grip {
  background: repeating-linear-gradient(90deg, #7b8494 0 1px, transparent 1px 2px);
}
.browse {
  display: flex;
  flex-direction: column;
  align-items: center;
  gap: 7px;
  height: 103px;
  padding-top: 7px;
}
.ball {
  width: 11px;
  height: 11px;
  border: 2px solid #333;
  border-radius: 50%;
  background: #cfcfcf;
}
.hscroll {
  grid-column: 1;
  display: flex;
  align-items: center;
  border-top: 1px solid #c5dbf7;
  border-bottom: 1px solid #5c82b8;
  background: #7a9ac4;
}
.prev {
  margin: 0 121px 0 2px;
  border-right-color: #45537c;
}
.next {
  margin: 0 2px 0 auto;
  border-left-color: #45537c;
}
.hthumb {
  display: flex;
  align-items: center;
  justify-content: center;
  width: 70%;
  height: 24px;
  border: 1px solid #4f6a98;
  border-radius: 2px;
  background: linear-gradient(#edf0f4, #d8dfe8 48%, #bcc9d8 52%, #c5d0dd);
}

/* Page */
.page {
  grid-column: 1;
  position: relative;
  margin-left: 4px;
  overflow: hidden;
  background: #fff;
  box-shadow: -4px 0 #6e97cd;
}
.page-head {
  height: 127px;
}
.crop {
  display: flex;
  justify-content: space-between;
  margin: 7px 0 0;
}
.crop::before, .crop::after {
  content: "";
  width: 16px;
  height: 36px;
  border: solid #a5a5a5;
  border-width: 0 1px 1px 0;
}
.crop::after {
  width: 7px;
  border-width: 0 0 1px 1px;
}
.page ul {
  padding-left: 88px;
  list-style: none;
  white-space: nowrap;
}
.page li {
  position: relative;
  font-size: 26px;
  line-height: 31px;
  margin-bottom: 24px;
}
.page li::before {
  content: "";
  position: absolute;
  left: -36px;
  top: 13px;
  width: 8px;
  height: 8px;
  border-radius: 50%;
  background: #000;
}
.page mark {
  display: inline-block;
  background: #9fedc2;
  color: inherit;
  white-space: pre;
}
.korean {
  font-family: "Liberation Serif", "Noto Sans CJK KR", serif;
}
.korean .crop {
  margin-bottom: 1px;
}
.korean li u {
  text-decoration: underline wavy #e00 1px;
  text-underline-offset: 2px;
}
.latin {
  font-size: 24px;
}
.soft {
  color: #333;
}
.ret {
  width: 8px;
  height: 9px;
}
.english {
  font-family: "Liberation Serif", serif;
}
.english li {
  font-size: 24px;
  line-height: 28px;
  margin-bottom: 23px;
}
.english li::before {
  top: 11px;
}
.english mark {
  line-height: 27px;
}
.deepl {
  display: flex;
  align-items: center;
  padding-bottom: 8px;
  background: #f3f9fd;
}
.deepl strong {
  margin-left: 14px;
  font: 600 29px "Inter", sans-serif;
  color: #0f2b46;
}
.deepl p {
  margin-left: 135px;
  padding-top: 2px;
  font-size: 20px;
  line-height: 22px;
  white-space: nowrap;
  color: #0f2b46;
}
.deepl a {
  color: #006494;
  text-decoration: none;
}
.blank {
  height: 61px;
  padding: 11px 16px;
  line-height: 20px;
}

/* Status bar */
.status {
  display: flex;
  align-items: center;
  border-top: 2px solid #dce9fb;
  background: linear-gradient(#dbe8fb, #c6dbf8 40%, #b0cdf5 45%, #c9defa);
  font-size: 19px;
  line-height: 26px;
  color: #15428b;
  white-space: nowrap;
}
.status > span {
  display: flex;
  align-items: center;
  height: 100%;
  padding: 4px 9px 0;
  border-right: 1px solid #92b4e2;
}
.status b {
  margin-left: 5px;
  font-weight: inherit;
}
.status .lang {
  gap: 16px;
  padding-right: 10px;
}
.status .fill {
  flex: 1;
  border-right: 2px solid #6f95c9;
}
.proof-ok, .locked .proof-bad {
  display: none;
}
.locked .proof-ok {
  display: inline;
}
.views {
  display: flex;
  height: 100%;
  margin-left: 7px;
  border: 1px solid #7e9fcf;
  background: #c3d8f3;
}
.views button {
  width: 27px;
  border-right: 1px solid #9dbbe4;
}
.views .on {
  background: linear-gradient(#f3d6ab, #f5b54a 50%, #fde08e);
}
.locked .outline {
  background: #d3d3d3;
}
.status .percent {
  padding: 4px 6px 0 9px;
  border: 0;
}
.status input {
  width: 148px;
  height: 20px;
  margin: 0 1px;
  appearance: none;
  background: linear-gradient(#5b7fb5, #5b7fb5) no-repeat center / 100% 1px;
}
.status input::-webkit-slider-thumb {
  appearance: none;
  width: 12px;
  height: 20px;
  border: 2px solid #4c6c9d;
  border-radius: 1px 1px 6px 6px;
  background: #e9f1fb;
}
.resize {
  width: 16px;
  height: 16px;
  margin: 8px 2px 0 7px;
  background: radial-gradient(#4c6590 40%, transparent 45%) 0 0 / 6px 6px;
  clip-path: polygon(100% 0, 100% 100%, 0 100%);
}
```
FILE: script.js
```javascript
// Both windows share the same chrome, only the document differs.
const topTemplate = document.getElementById('topTemplate');
const bottomTemplate = document.getElementById('bottomTemplate');

document.querySelectorAll('.window').forEach(function(win) {
  win.prepend(topTemplate.content.cloneNode(true));
  win.append(bottomTemplate.content.cloneNode(true));
  win.querySelector('.title').textContent = win.dataset.title;
  win.querySelector('.words').textContent = win.dataset.words;

  // Protected document: editing commands are off
  if (win.classList.contains('locked')) {
    win.querySelector('.name option').textContent = '';
    win.querySelector('.size option').textContent = '10';
    win.querySelectorAll('.edit').forEach(function(el) {
      el.disabled = true;
    });
  }
});
```
